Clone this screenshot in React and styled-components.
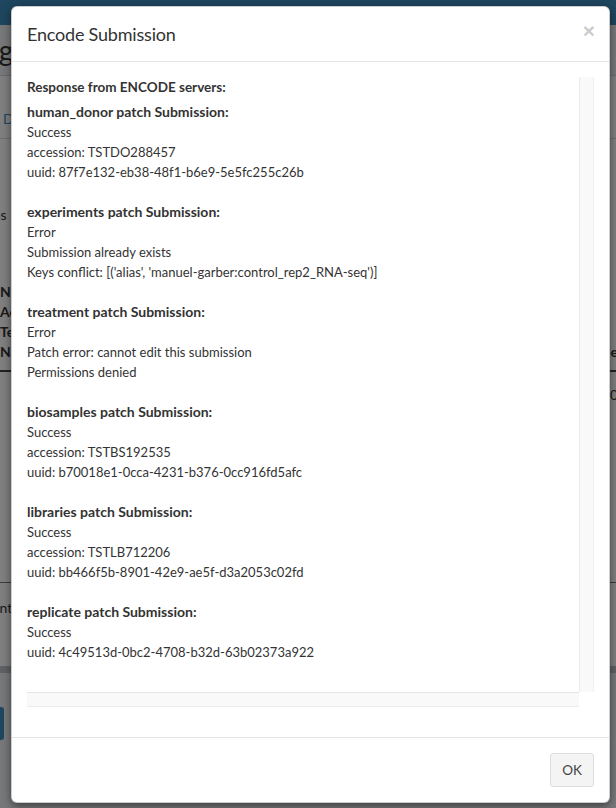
import React from 'react';
import styled, { createGlobalStyle } from 'styled-components';

const GlobalStyle = createGlobalStyle`
  html, body { margin: 0; padding: 0; }
  * { box-sizing: border-box; }
  body {
    font-family: Lato, "Open Sans", "Liberation Sans", sans-serif;
    font-size: 13px;
    color: #333;
    background: #ecf0f5;
  }
`;

/* ---------- background page (behind the backdrop) ---------- */
const Page = styled.div`
  position: relative;
  width: 616px;
  height: 808px;
  overflow: hidden;
  background: #ecf0f5;
`;

const Navbar = styled.div`
  height: 25px;
  background: #3c8dbc;
`;

const PageTitle = styled.h1`
  margin: 10px 0 9px -72px;
  font-size: 28px;
  line-height: 31px;
  font-weight: 400;
  color: #333;
  white-space: nowrap;
`;

const Box = styled.div`
  background: #fff;
  border-top: 1px solid #d2d6de;
`;

const Tabs = styled.div`
  display: flex;
  justify-content: space-between;
  height: 63px;
  padding-top: 33px;
  border-bottom: 1px solid #ddd;
`;

const TabLink = styled.span`
  font-size: 14px;
  line-height: 20px;
  color: #3c8dbc;
  white-space: nowrap;
  margin-left: ${p => p.$left || 0}px;
  margin-right: ${p => p.$right || 0}px;
`;

const BoxBody = styled.div`
  padding: 66px 0 164px;
`;

const SmallNote = styled.div`
  line-height: 20px;
  font-size: 14px;
  margin-left: -44px;
  white-space: nowrap;
`;

const DataTable = styled.table`
  width: 616px;
  margin-top: 57px;
  border-collapse: collapse;
  font-size: 14px;
  th {
    text-align: left;
    vertical-align: bottom;
    line-height: 20px;
    padding: 0 0 8px;
    border-bottom: 2px solid #444;
    font-weight: 700;
    white-space: nowrap;
  }
  th:last-child, td:last-child { text-align: right; }
  td { padding: 13px 0; line-height: 20px; }
`;

const RightCell = styled.span`
  display: inline-block;
  margin-right: ${p => p.$shift}px;
`;

const BoxFooter = styled.div`
  border-top: 1px solid #777;
  padding: 15px 0 48px;
  font-size: 14px;
  line-height: 20px;
`;

const CutText = styled.div`
  margin-left: ${p => p.$shift}px;
  white-space: nowrap;
`;

const Band = styled.div`
  height: 7px;
  background: #c0c3c8;
  margin-bottom: 34px;
`;

const BlueButton = styled.div`
  width: 40px;
  height: 33px;
  margin-left: -36px;
  border-radius: 3px;
  background: #3c8dbc;
`;

/* ---------- modal ---------- */
const Backdrop = styled.div`
  position: absolute;
  inset: 0;
  background: rgba(0, 0, 0, 0.5);
`;

const Modal = styled.div`
  position: absolute;
  top: 6px;
  left: 11px;
  width: 599px;
  display: flex;
  flex-direction: column;
  background: #fff;
  border: 1px solid rgba(0, 0, 0, 0.2);
  border-radius: 6px;
  box-shadow: 0 3px 9px rgba(0, 0, 0, 0.5);
`;

const Header = styled.div`
  display: flex;
  justify-content: space-between;
  align-items: flex-start;
  padding: 15px;
  border-bottom: 1px solid #e5e5e5;
`;

const Title = styled.h4`
  margin: 0;
  font-size: 18px;
  line-height: 24px;
  font-weight: 400;
  letter-spacing: -0.2px;
  color: #333;
`;

const Close = styled.button`
  border: 0;
  background: transparent;
  padding: 0;
  margin-top: -2px;
  margin-right: -1px;
  font-family: "Liberation Sans", Arial, sans-serif;
  font-size: 21px;
  font-weight: 700;
  line-height: 1;
  color: #000;
  opacity: 0.2;
  cursor: pointer;
`;

const Body = styled.div`
  padding: 15px 15px 30px;
`;

const ScrollFrame = styled.div`
  display: grid;
  grid-template-columns: 1fr 15px;
  grid-template-rows: 615px 15px;
`;

const ScrollContent = styled.div`
  overflow: hidden;
`;

const VTrack = styled.div`
  background: #f9f9f9;
  border-left: 1px solid #ebebeb;
  border-right: 1px solid #efefef;
`;

const HTrack = styled.div`
  background: #f9f9f9;
  border-top: 1px solid #e6e6e6;
  border-bottom: 1px solid #ececec;
`;

const Corner = styled.div`
  background: #fff;
`;

const Lead = styled.div`
  font-size: 13.5px;
  font-weight: 700;
  line-height: 20px;
  margin-bottom: 5px;
`;

const Section = styled.div`
  margin-bottom: 20px;
`;

const SectionTitle = styled.div`
  font-size: 14px;
  font-weight: 700;
  line-height: 20px;
`;

const Line = styled.div`
  font-size: 13px;
  line-height: 20px;
  white-space: nowrap;
`;

const Footer = styled.div`
  display: flex;
  justify-content: flex-end;
  padding: 15px;
  border-top: 1px solid #e5e5e5;
`;

const Button = styled.button`
  height: 34px;
  padding: 6px 11px;
  font-family: inherit;
  font-size: 13.5px;
  line-height: 20px;
  color: #444;
  background: #f4f4f4;
  border: 1px solid #ddd;
  border-radius: 3px;
  cursor: pointer;
`;

const sections = [
  { title: 'human_donor patch Submission:', lines: ['Success', 'accession: TSTDO288457', 'uuid: 87f7e132-eb38-48f1-b6e9-5e5fc255c26b'] },
  { title: 'experiments patch Submission:', lines: ['Error', 'Submission already exists', "Keys conflict: [('alias', 'manuel-garber:control_rep2_RNA-seq')]"] },
  { title: 'treatment patch Submission:', lines: ['Error', 'Patch error: cannot edit this submission', 'Permissions denied'] },
  { title: 'biosamples patch Submission:', lines: ['Success', 'accession: TSTBS192535', 'uuid: b70018e1-0cca-4231-b376-0cc916fd5afc'] },
  { title: 'libraries patch Submission:', lines: ['Success', 'accession: TSTLB712206', 'uuid: bb466f5b-8901-42e9-ae5f-d3a2053c02fd'] },
  { title: 'replicate patch Submission:', lines: ['Success', 'uuid: 4c49513d-0bc2-4708-b32d-63b02373a922'] },
];

export default function App() {
  return (
    <>
      <GlobalStyle />
      <Page>
        <Navbar />
        <PageTitle>Editing</PageTitle>
        <Box>
          <Tabs>
            <TabLink $left={3}>Details</TabLink>
            <TabLink $right={-40}>Docs</TabLink>
          </Tabs>
          <BoxBody>
            <SmallNote>Samples</SmallNote>
            <DataTable>
              <thead>
                <tr>
                  <th>Number<br />Accession<br />Term<br />Name</th>
                  <th><RightCell $shift={-2}>Type</RightCell></th>
                </tr>
              </thead>
              <tbody>
                <tr>
                  <td></td>
                  <td><RightCell $shift={-2}>0</RightCell></td>
                </tr>
              </tbody>
            </DataTable>
          </BoxBody>
          <BoxFooter>
            <CutText $shift={-48}>Comment</CutText>
          </BoxFooter>
        </Box>
        <Band />
        <BlueButton />

        <Backdrop />
        <Modal>
          <Header>
            <Title>Encode Submission</Title>
            <Close aria-label="Close">×</Close>
          </Header>
          <Body>
            <ScrollFrame>
              <ScrollContent>
                <Lead>Response from ENCODE servers:</Lead>
                {sections.map(s => (
                  <Section key={s.title}>
                    <SectionTitle>{s.title}</SectionTitle>
                    {s.lines.map(l => (
                      <Line key={l}>{l}</Line>
                    ))}
                  </Section>
                ))}
              </ScrollContent>
              <VTrack />
              <HTrack />
              <Corner />
            </ScrollFrame>
          </Body>
          <Footer>
            <Button>OK</Button>
          </Footer>
        </Modal>
      </Page>
    </>
  );
}
